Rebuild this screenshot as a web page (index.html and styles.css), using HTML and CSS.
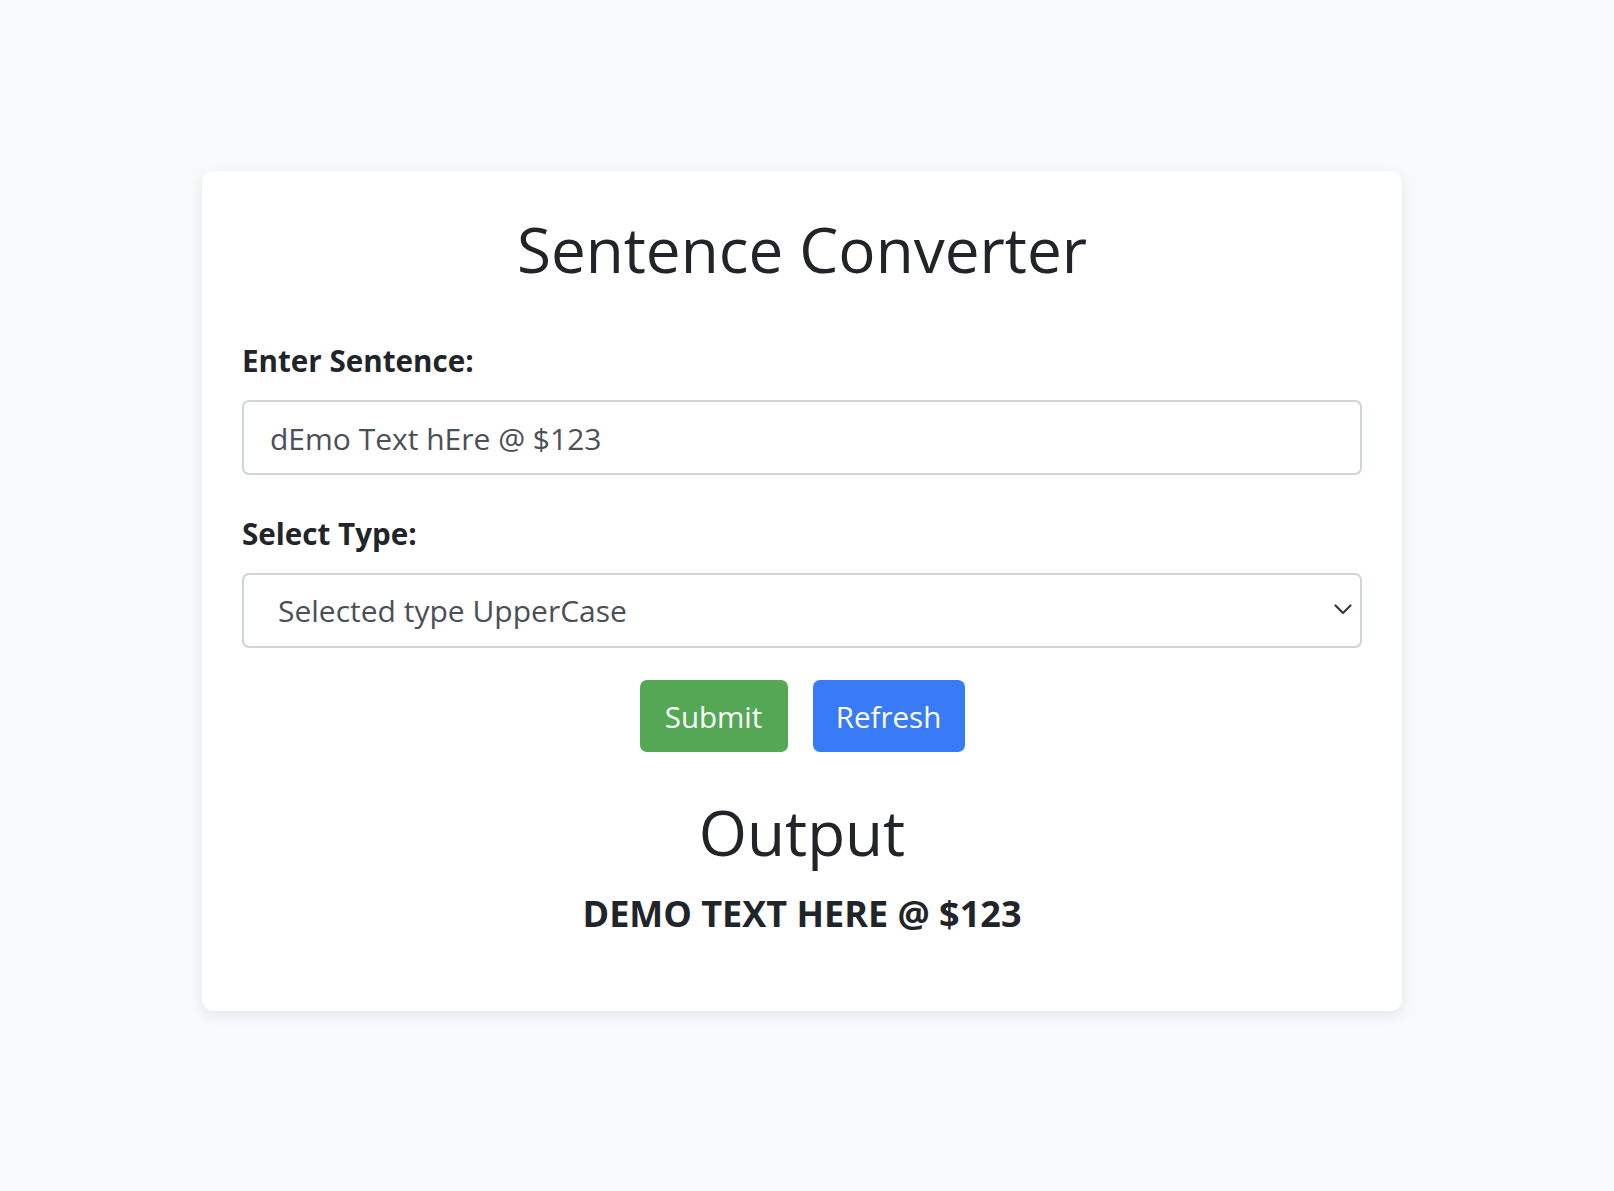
FILE: index.html
```html
<!DOCTYPE html>
<html lang="en">
<head>
<meta charset="utf-8">
<title>Sentence Converter</title>
<link rel="stylesheet" href="styles.css">
</head>
<body>
<main class="page">
  <section class="card">
    <h1 class="title">Sentence Converter</h1>
    <form class="form">
      <div class="field">
        <label class="label" for="sentence">Enter Sentence:</label>
        <input class="control" id="sentence" type="text" value="dEmo Text hEre @ $123">
      </div>
      <div class="field field-last">
        <label class="label" for="type">Select Type:</label>
        <div class="select-wrap">
          <select class="control select" id="type">
            <option>Selected type UpperCase</option>
            <option>Selected type LowerCase</option>
          </select>
          <svg class="chevron" width="18" height="11" viewBox="0 0 18 11" aria-hidden="true"><path d="M1.5 1.5 L9 9 L16.5 1.5" fill="none" stroke="#343a40" stroke-width="2.2" stroke-linecap="round" stroke-linejoin="round"/></svg>
        </div>
      </div>
      <div class="actions">
        <button type="button" class="btn btn-green">Submit</button>
        <button type="button" class="btn btn-blue">Refresh</button>
      </div>
    </form>
    <h2 class="out-title">Output</h2>
    <p class="out-text">DEMO TEXT HERE @ $123</p>
  </section>
</main>
</body>
</html>
```
FILE: styles.css
```css
* { box-sizing: border-box; }
html, body { margin: 0; }
body {
  background: #f8f9fa;
  font-family: "Open Sans", "Noto Sans", sans-serif;
  color: #212529;
  min-height: 1191px;
}
.page { padding: 171px 0 0 202px; }
.card {
  width: 1200px;
  min-height: 840px;
  background: #fff;
  border-radius: 12px;
  box-shadow: 0 4px 14px rgba(0,0,0,0.08);
  padding: 40px;
}
.title {
  margin: 0 0 50px;
  text-align: center;
  font-size: 62px;
  font-weight: 400;
  line-height: 77px;
}
.form { display: flex; flex-direction: column; }
.field { display: flex; flex-direction: column; margin-bottom: 36px; }
.field-last { margin-bottom: 32px; }
.label {
  font-size: 29.6px;
  font-weight: 700;
  line-height: 45px;
  margin-bottom: 17px;
}
.control {
  width: 1120px;
  height: 75px;
  border: 2px solid #ced4da;
  border-radius: 7px;
  padding: 2px 26px 0;
  font-family: inherit;
  font-size: 30px;
  color: #495057;
  background: #fff;
}
.select-wrap { position: relative; }
.select {
  appearance: none;
  -webkit-appearance: none;
  padding: 0 60px 0 34px;
}
.chevron { position: absolute; right: 10px; top: 31px; pointer-events: none; }
.actions { display: flex; justify-content: center; gap: 25px; }
.btn {
  height: 72px;
  border: 0;
  border-radius: 7px;
  padding: 0;
  font-family: inherit;
  font-size: 29.5px;
  color: #fff;
  cursor: pointer;
}
.btn-green { background: #54a754; width: 148px; }
.btn-blue { background: #397bf6; width: 152px; }
.out-title {
  margin: 42px 0 23px;
  text-align: center;
  font-size: 62px;
  font-weight: 400;
  line-height: 77px;
}
.out-text {
  margin: 0;
  text-align: center;
  font-size: 36px;
  font-weight: 700;
  line-height: 40px;
}
```
